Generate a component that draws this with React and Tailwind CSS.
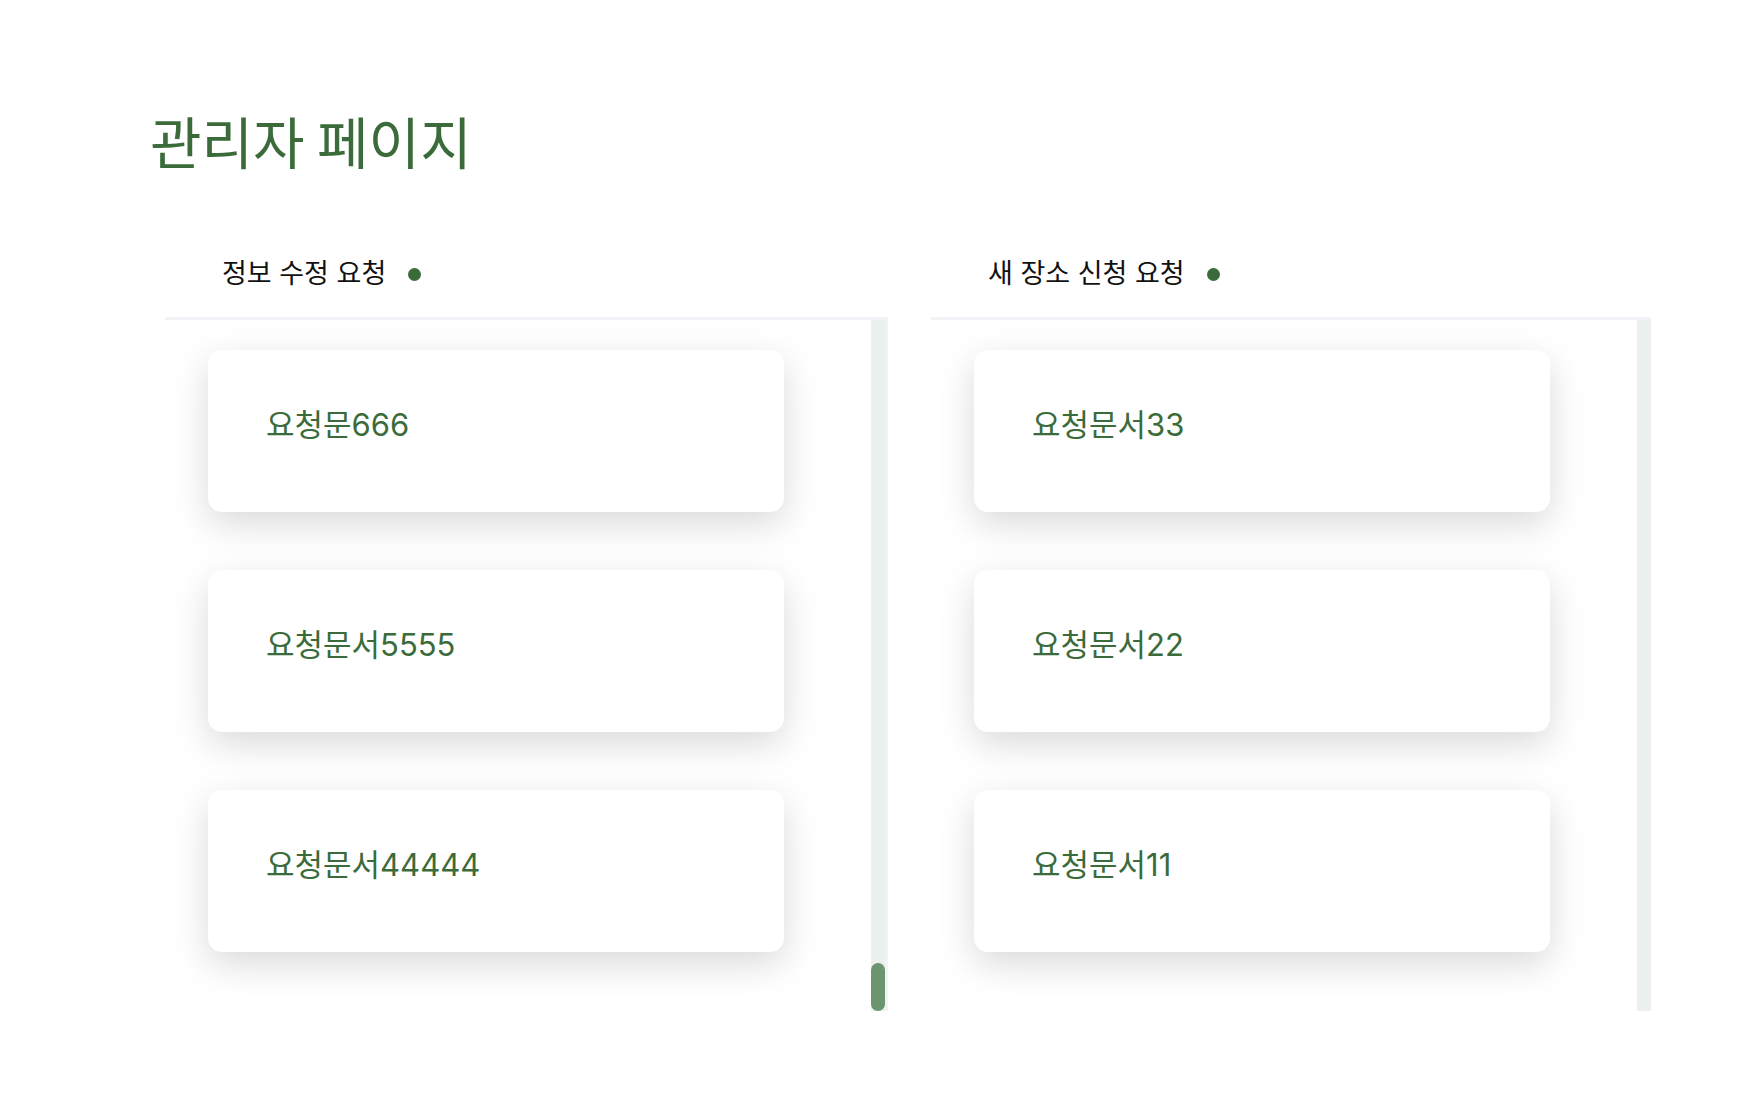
import React from "react";

const EDIT_REQUESTS = ["요청문666", "요청문서5555", "요청문서44444"];
const PLACE_REQUESTS = ["요청문서33", "요청문서22", "요청문서11"];

function RequestCard({ title }) {
  return (
    <div className="w-[576px] h-[162px] shrink-0 rounded-[14px] bg-white pt-[52px] pl-[58px] shadow-[0_12px_36px_rgba(0,0,0,0.15)]">
      <span className="text-[31px] leading-[45px] text-[#3b6b3a]">{title}</span>
    </div>
  );
}

function RequestPanel({ label, items, thumb, edge }) {
  return (
    <section className="flex flex-col">
      {/* header row with status dot */}
      <div className="h-[86px] flex items-center pl-[57px] gap-[22px]">
        <h2 className="text-[27px] text-[#111111]">{label}</h2>
        <span className="w-[13px] h-[13px] rounded-full bg-[#3b6b3a]" />
      </div>

      <div className={`flex border-t-[3px] border-[#f2f2f7] ${edge ? "border-r-[3px] border-r-[#f1f3f7]" : ""}`}>
        <div className="w-[706px] h-[691px] overflow-hidden flex flex-col gap-[58px] pl-[43px] pt-[30px]">
          {items.map((title) => (
            <RequestCard key={title} title={title} />
          ))}
        </div>
        {/* scrollbar track */}
        <div className="w-[14px] h-[691px] bg-[#ebf0ec] flex flex-col justify-end">
          {thumb && <div className="h-[48px] rounded-full bg-[#6b956e]" />}
        </div>
      </div>
    </section>
  );
}

export default function App() {
  return (
    <div className="min-h-screen bg-white font-['Inter','Noto_Sans_CJK_KR',sans-serif] pt-[106px]">
      <h1 className="pl-[150px] text-[56px] leading-[67px] text-[#3b6b3a] font-['Noto_Sans_CJK_KR',sans-serif]">
        관리자 페이지
      </h1>

      <div className="mt-[58px] pl-[165px] flex gap-[43px]">
        <RequestPanel label="정보 수정 요청" items={EDIT_REQUESTS} thumb edge />
        <RequestPanel label="새 장소 신청 요청" items={PLACE_REQUESTS} />
      </div>
    </div>
  );
}
